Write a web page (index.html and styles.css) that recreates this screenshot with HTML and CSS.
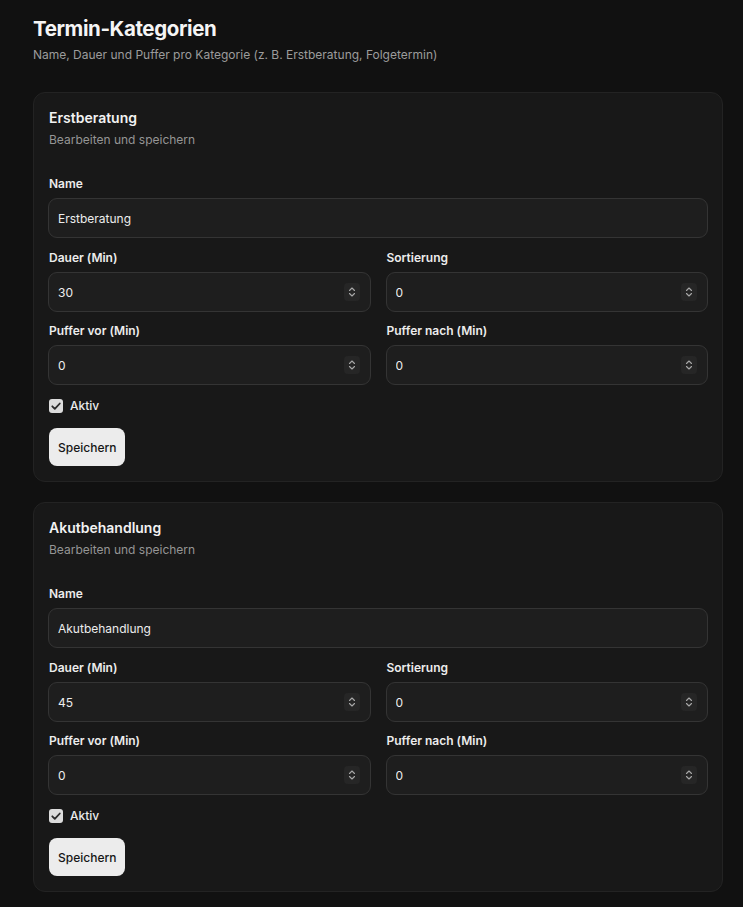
FILE: index.html
```html
<!DOCTYPE html>
<html lang="de">
<head>
    <meta charset="UTF-8">
    <meta name="viewport" content="width=device-width, initial-scale=1.0">
    <title>Termin-Kategorien</title>
    <link rel="stylesheet" href="styles.css">
</head>
<body>
    <div class="page">
        <div class="page-head">
            <h1>Termin-Kategorien</h1>
            <p>Name, Dauer und Puffer pro Kategorie (z. B. Erstberatung, Folgetermin)</p>
        </div>

        <div class="card">
            <div class="card-head">
                <h2>Erstberatung</h2>
                <p>Bearbeiten und speichern</p>
            </div>
            <div class="field">
                <label>Name</label>
                <div class="box"><input type="text" value="Erstberatung"></div>
            </div>
            <div class="grid">
                <div class="field">
                    <label>Dauer (Min)</label>
                    <div class="box"><input type="text" value="30"><span class="spin"><svg viewBox="0 0 12 14" width="12" height="14"><path d="M3.5 5.5L6 3l2.5 2.5M3.5 8.5L6 11l2.5-2.5"/></svg></span></div>
                </div>
                <div class="field">
                    <label>Sortierung</label>
                    <div class="box"><input type="text" value="0"><span class="spin"><svg viewBox="0 0 12 14" width="12" height="14"><path d="M3.5 5.5L6 3l2.5 2.5M3.5 8.5L6 11l2.5-2.5"/></svg></span></div>
                </div>
                <div class="field">
                    <label>Puffer vor (Min)</label>
                    <div class="box"><input type="text" value="0"><span class="spin"><svg viewBox="0 0 12 14" width="12" height="14"><path d="M3.5 5.5L6 3l2.5 2.5M3.5 8.5L6 11l2.5-2.5"/></svg></span></div>
                </div>
                <div class="field">
                    <label>Puffer nach (Min)</label>
                    <div class="box"><input type="text" value="0"><span class="spin"><svg viewBox="0 0 12 14" width="12" height="14"><path d="M3.5 5.5L6 3l2.5 2.5M3.5 8.5L6 11l2.5-2.5"/></svg></span></div>
                </div>
            </div>
            <div class="check">
                <span class="tick"><svg viewBox="0 0 14 14" width="14" height="14"><path d="M3.3 7.3l2.5 2.5 5-5.3"/></svg></span>
                <span>Aktiv</span>
            </div>
            <div><button class="btn">Speichern</button></div>
        </div>

        <div class="card">
            <div class="card-head">
                <h2>Akutbehandlung</h2>
                <p>Bearbeiten und speichern</p>
            </div>
            <div class="field">
                <label>Name</label>
                <div class="box"><input type="text" value="Akutbehandlung"></div>
            </div>
            <div class="grid">
                <div class="field">
                    <label>Dauer (Min)</label>
                    <div class="box"><input type="text" value="45"><span class="spin"><svg viewBox="0 0 12 14" width="12" height="14"><path d="M3.5 5.5L6 3l2.5 2.5M3.5 8.5L6 11l2.5-2.5"/></svg></span></div>
                </div>
                <div class="field">
                    <label>Sortierung</label>
                    <div class="box"><input type="text" value="0"><span class="spin"><svg viewBox="0 0 12 14" width="12" height="14"><path d="M3.5 5.5L6 3l2.5 2.5M3.5 8.5L6 11l2.5-2.5"/></svg></span></div>
                </div>
                <div class="field">
                    <label>Puffer vor (Min)</label>
                    <div class="box"><input type="text" value="0"><span class="spin"><svg viewBox="0 0 12 14" width="12" height="14"><path d="M3.5 5.5L6 3l2.5 2.5M3.5 8.5L6 11l2.5-2.5"/></svg></span></div>
                </div>
                <div class="field">
                    <label>Puffer nach (Min)</label>
                    <div class="box"><input type="text" value="0"><span class="spin"><svg viewBox="0 0 12 14" width="12" height="14"><path d="M3.5 5.5L6 3l2.5 2.5M3.5 8.5L6 11l2.5-2.5"/></svg></span></div>
                </div>
            </div>
            <div class="check">
                <span class="tick"><svg viewBox="0 0 14 14" width="14" height="14"><path d="M3.3 7.3l2.5 2.5 5-5.3"/></svg></span>
                <span>Aktiv</span>
            </div>
            <div><button class="btn">Speichern</button></div>
        </div>
    </div>
</body>
</html>
```

FILE: styles.css
```css
* {
    margin: 0;
    padding: 0;
    box-sizing: border-box;
}
body {
    background: #111111;
    color: #ededed;
    font-family: Inter, "Noto Sans", sans-serif;
}
.page {
    padding: 16px 20px 20px 33px;
}
.page-head h1 {
    font-size: 20.5px;
    line-height: 26px;
    font-weight: 700;
    letter-spacing: -0.4px;
    color: #f5f5f5;
}
.page-head p {
    margin-top: 4px;
    font-size: 12px;
    line-height: 18px;
    color: #9c9c9c;
}
.card {
    margin-top: 28px;
    background: #181818;
    border: 1px solid #232323;
    border-radius: 12px;
    padding: 15px 14px 15px 14px;
}
.card + .card {
    margin-top: 20px;
}
.card-head {
    margin-bottom: 26px;
    padding-left: 1px;
}
.card-head h2 {
    font-size: 14px;
    line-height: 20px;
    font-weight: 600;
    color: #f2f2f2;
}
.card-head p {
    margin-top: 2px;
    font-size: 12px;
    line-height: 20px;
    color: #959595;
}
.field label {
    display: block;
    font-size: 12px;
    line-height: 16px;
    font-weight: 600;
    color: #ececec;
    margin-bottom: 6px;
    padding-left: 1px;
}
.box {
    display: flex;
    align-items: center;
    height: 40px;
    background: #1e1e1e;
    border: 1px solid #343434;
    border-radius: 9px;
    padding: 0 10px 0 9px;
}
.box input {
    flex: 1;
    min-width: 0;
    background: transparent;
    border: 0;
    outline: none;
    color: #ededed;
    font-family: inherit;
    font-size: 12px;
}
.spin {
    width: 16px;
    height: 18px;
    border-radius: 4px;
    background: #262626;
    display: flex;
    align-items: center;
    justify-content: center;
}
.spin path {
    fill: none;
    stroke: #a8a8a8;
    stroke-width: 1.1;
    stroke-linecap: round;
    stroke-linejoin: round;
}
.grid {
    display: grid;
    grid-template-columns: 1fr 1fr;
    column-gap: 15px;
    row-gap: 11px;
    margin-top: 12px;
}
.check {
    display: flex;
    align-items: center;
    gap: 7px;
    margin-top: 13px;
    padding-left: 1px;
    font-size: 12px;
    font-weight: 500;
    color: #ececec;
}
.tick {
    width: 14px;
    height: 14px;
    border-radius: 3px;
    background: #dcdcdc;
    display: flex;
}
.tick path {
    fill: none;
    stroke: #2a2a2a;
    stroke-width: 1.8;
    stroke-linecap: round;
    stroke-linejoin: round;
}
.btn {
    margin-top: 15px;
    margin-left: 1px;
    height: 38px;
    padding: 0 9px;
    background: #ececec;
    color: #161616;
    border: 0;
    border-radius: 8px;
    font-family: inherit;
    font-size: 12px;
    font-weight: 500;
}
```
